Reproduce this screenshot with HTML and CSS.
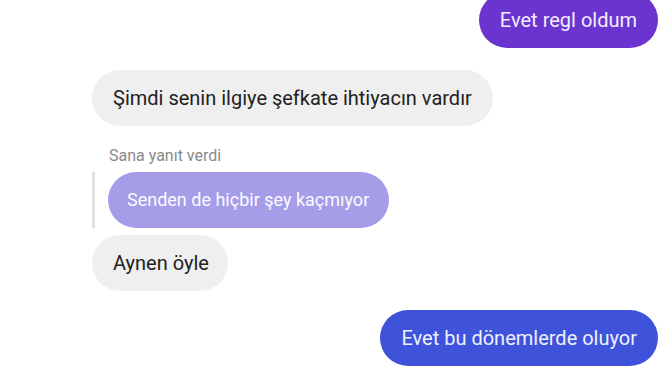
FILE: index.html
```html
<!DOCTYPE html>
<html lang="tr">
  <head>
    <title>Sohbet</title>
    <meta charset="utf-8">
    <link rel="stylesheet" href="styles.css">
  </head>
  <body>
    <div class="chat">
      <div class="bubble out first">Evet regl oldum</div>
      <div class="bubble in second">Şimdi senin ilgiye şefkate ihtiyacın vardır</div>
      <div class="replyLabel">Sana yanıt verdi</div>
      <div class="replyRow">
        <div class="replyBar"></div>
        <div class="bubble quoted">Senden de hiçbir şey kaçmıyor</div>
      </div>
      <div class="bubble in fourth">Aynen öyle</div>
      <div class="bubble outBlue last">Evet bu dönemlerde oluyor</div>
    </div>
  </body>
</html>
```

FILE: styles.css
```css
body{
  margin: 0;
  background-color: #ffffff;
  font-family: Roboto, "Noto Sans", sans-serif;
  overflow: hidden;
}
.chat{
  display: flex;
  flex-direction: column;
  align-items: flex-start;
  padding: 0 14px 0 92px;
}
.bubble{
  height: 56px;
  line-height: 56px;
  padding: 0 21px;
  border-radius: 28px;
  font-size: 20px;
  white-space: nowrap;
}
.in{
  background-color: #efefef;
  color: #222222;
}
.out{
  align-self: flex-end;
  background-color: #6b34cf;
  color: #f3ecff;
}
.outBlue{
  align-self: flex-end;
  background-color: #3e53d9;
  color: #eef0ff;
}
.first{
  margin-top: -8px;
}
.second{
  margin-top: 22px;
}
.replyLabel{
  margin: 20px 0 0 17px;
  font-size: 16px;
  color: #8a8a8a;
}
.replyRow{
  display: flex;
  align-items: stretch;
  gap: 13px;
  margin-top: 7px;
}
.replyBar{
  width: 3px;
  background-color: #e2e2e2;
}
.quoted{
  font-size: 18px;
  padding: 0 20px 0 19px;
  background-color: #a69de8;
  color: #fbfaff;
}
.fourth{
  margin-top: 7px;
  padding-right: 19px;
}
.last{
  margin-top: 19px;
}
```
